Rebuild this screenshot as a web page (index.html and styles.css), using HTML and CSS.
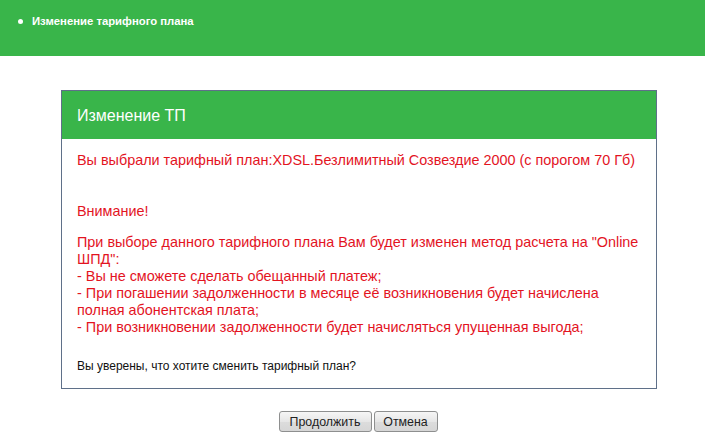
FILE: index.html
```html
<!DOCTYPE html>
<html lang="ru">
<head>
  <meta charset="UTF-8">
  <title>Изменение тарифного плана</title>
  <link rel="stylesheet" href="styles.css">
</head>
<body>

  <div class="topbar">
    <ul class="crumbs">
      <li>Изменение тарифного плана</li>
    </ul>
  </div>

  <div class="wrap">
    <div class="panel">
      <div class="panel-head">Изменение ТП</div>
      <div class="panel-body">
        <p class="warn">Вы выбрали тарифный план:XDSL.Безлимитный Созвездие 2000 (с порогом 70 Гб)</p>
        <p class="warn attention">Внимание!</p>
        <p class="warn details">При выборе данного тарифного плана Вам будет изменен метод расчета на "Online ШПД":<br>
          - Вы не сможете сделать обещанный платеж;<br>
          - При погашении задолженности в месяце её возникновения будет начислена полная абонентская плата;<br>
          - При возникновении задолженности будет начисляться упущенная выгода;</p>
        <p class="question">Вы уверены, что хотите сменить тарифный план?</p>
      </div>
    </div>

    <form class="actions" onsubmit="event.preventDefault();">
      <button type="submit" class="btn-next">Продолжить</button>
      <button type="button" class="btn-cancel">Отмена</button>
    </form>
  </div>

</body>
</html>
```

FILE: styles.css
```css
body {
  font-family: Arial, "Liberation Sans", sans-serif;
  background-color: #fff;
  margin: 0;
  padding: 0;
}
.topbar {
  background-color: #39b54a;
  height: 56px;
}
.crumbs {
  list-style: none;
  margin: 0;
  padding: 15px 0 0 32px;
  color: #fff;
  font-size: 11.3px;
  font-weight: bold;
  line-height: 13px;
}
.crumbs li {
  position: relative;
}
.crumbs li::before {
  content: "";
  position: absolute;
  left: -14px;
  top: 4px;
  width: 5px;
  height: 5px;
  border-radius: 50%;
  background-color: #fff;
}
.wrap {
  width: 596px;
  margin: 34px 0 0 61px;
}
.panel {
  border: 1px solid #5f7089;
}
.panel-head {
  background-color: #39b54a;
  color: #fff;
  font-size: 16px;
  height: 48px;
  line-height: 49px;
  padding-left: 15px;
}
.panel-body {
  padding: 13px 10px 14px 15px;
}
.panel-body p {
  margin: 0;
}
.warn {
  color: #e3141f;
  font-size: 14.4px;
  line-height: 17px;
}
.attention {
  margin-top: 34px !important;
}
.details {
  margin-top: 14px !important;
}
.question {
  margin-top: 23px !important;
  font-size: 12px;
  line-height: 15px;
  color: #111;
}
.actions {
  text-align: center;
  margin-top: 22px;
  padding-right: 2px;
  font-size: 0;
}
button {
  font-family: Arial, "Liberation Sans", sans-serif;
  font-size: 12.4px;
  color: #222;
  height: 21px;
  padding: 0;
  margin: 0 1px;
  border: 1px solid #8e8f8f;
  border-radius: 3px;
  background: linear-gradient(#f6f6f6, #e6e6e6 50%, #dcdcdc 51%, #d6d6d6);
  cursor: pointer;
}
button:hover {
  background: linear-gradient(#eaf6fd, #d9f0fc 50%, #bee6fd 51%, #a7d9f5);
}
.btn-next {
  width: 93px;
}
.btn-cancel {
  width: 64px;
}
```
